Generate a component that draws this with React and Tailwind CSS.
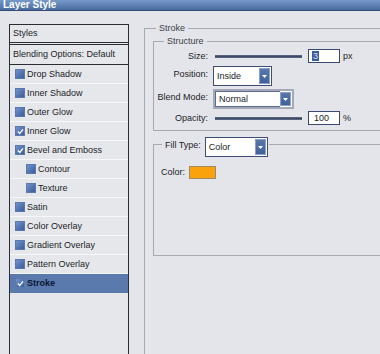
import React from "react";

const BG = "bg-[#e4e5ea]";

function Check({ checked }) {
  return (
    <div className="w-[10px] h-[10px] shrink-0 border border-[#5a79b0] bg-gradient-to-br from-[#7393c8] to-[#3a5c9b] flex items-center justify-center">
      {checked && (
        <svg width="7" height="7" viewBox="0 0 7 7">
          <path d="M1 3.6 L2.8 5.4 L6 1.4" stroke="#fff" strokeWidth="1.4" fill="none" />
        </svg>
      )}
    </div>
  );
}

function Row({ label, checked, sub, selected }) {
  return (
    <div
      className={
        "h-[19px] border-b flex items-center gap-[2px] " +
        (sub ? "pl-[16px] " : "pl-[5px] ") +
        (selected
          ? "bg-[#5a79ad] border-[#5a79ad] font-bold text-[#0b1431]"
          : "border-[#f6f7f9]")
      }
    >
      <Check checked={checked} />
      <span className="leading-[11px]">{label}</span>
    </div>
  );
}

function Arrow() {
  return (
    <svg width="5" height="3" viewBox="0 0 5 3">
      <path d="M0 0 H5 L2.5 3 Z" fill="#fff" />
    </svg>
  );
}

function Select({ value, width, framed }) {
  return (
    <div
      className={
        "h-[20px] flex items-stretch bg-white " +
        (framed ? "border-2 border-[#a3a9b9] " : "border border-[#3e4e73] ")
      }
      style={{ width }}
    >
      <div className={"flex-1 flex items-center pl-[3px] leading-[11px] " + (framed ? "border border-[#5e6d8d] border-r-0" : "")}>
        {value}
      </div>
      <div className={"w-[11px] my-[1px] mr-[1px] bg-gradient-to-b from-[#5877ad] to-[#41619a] border border-[#8aa0c8] flex items-center justify-center " + (framed ? "my-0 mr-0" : "")}>
        <Arrow />
      </div>
    </div>
  );
}

function SliderRow({ label, value, unit, selected }) {
  return (
    <div className="flex items-center h-[14px]">
      <div className="w-[54px] text-right leading-[11px]">{label}</div>
      <div className="ml-[7px] w-[87px] h-[3px] bg-[#3c4867] border-y border-[#56627e]" />
      <div className="ml-[6px] w-[32px] h-[14px] bg-white border border-[#3a4a6d] flex items-center pl-[2px]">
        {selected ? (
          <span className="bg-[#3a5d9c] text-[#d6e0f2] px-[1px] leading-[10px] ml-[1px]">{value}</span>
        ) : (
          <span className="leading-[10px] pl-[3px]">{value}</span>
        )}
      </div>
      <span className="ml-[3px] leading-[11px]">{unit}</span>
    </div>
  );
}

function SelectRow({ label, value, width, framed }) {
  return (
    <div className="flex items-center h-[20px]">
      <div className="w-[54px] text-right leading-[11px] -mt-[3px]">{label}</div>
      <div className="ml-[5px]">
        <Select value={value} width={width} framed={framed} />
      </div>
    </div>
  );
}

export default function App() {
  return (
    <div
      className={"w-[380px] h-[354px] overflow-hidden text-[9px] text-[#1b1d27] " + BG}
      style={{ fontFamily: "'Liberation Sans', Arial, sans-serif" }}
    >
      <div className="h-[11px] bg-gradient-to-b from-[#7799ca] to-[#4a6b9f] border-b border-[#2f4a78] pl-[3px] text-white font-bold text-[10px] leading-[10px]">
        Layer Style
      </div>
      <div className="flex">
        {/* Left list */}
        <div className="ml-[9px] mt-[13px] w-[120px] h-[340px] border border-[#2b2d35] bg-[#e6e7eb] shrink-0">
          <div className="h-[20px] border-b-[3px] border-double border-[#2b2d35] flex items-center pl-[3px] leading-[11px]">
            Styles
          </div>
          <div className="h-[20px] border-b border-[#2b2d35] flex items-center pl-[3px] leading-[11px]">
            Blending Options: Default
          </div>
          <Row label="Drop Shadow" />
          <Row label="Inner Shadow" />
          <Row label="Outer Glow" />
          <Row label="Inner Glow" checked />
          <Row label="Bevel and Emboss" checked />
          <Row label="Contour" sub />
          <Row label="Texture" sub />
          <Row label="Satin" />
          <Row label="Color Overlay" />
          <Row label="Gradient Overlay" />
          <Row label="Pattern Overlay" />
          <Row label="Stroke" checked selected />
        </div>

        {/* Right area */}
        <div className="ml-[15px] mt-[17px] flex-1 min-w-0">
          <div className="h-[340px] border-l border-t border-[#a6a9b2] pl-[8px]">
            <div className={"-mt-[6px] ml-[3px] w-fit px-[3px] leading-[11px] text-[#3b3d47] " + BG}>
              Stroke
            </div>
            <div className="mt-[7px] border-l border-t border-b border-[#a6a9b2] pb-[5px]">
              <div className={"-mt-[6px] ml-[10px] w-fit px-[3px] leading-[11px] text-[#3b3d47] " + BG}>
                Structure
              </div>
              <div className="mt-[2px]">
                <SliderRow label="Size:" value="3" unit="px" selected />
              </div>
              <div className="mt-[3px]">
                <SelectRow label="Position:" value="Inside" width={59} />
              </div>
              <div className="mt-[3px]">
                <SelectRow label="Blend Mode:" value="Normal" width={81} framed />
              </div>
              <div className="mt-[2px]">
                <SliderRow label="Opacity:" value="100" unit="%" />
              </div>
            </div>
            <div className="mt-[13px] h-[112px] border-l border-t border-b border-[#a6a9b2]">
              <div className={"-mt-[8px] ml-[8px] w-fit pl-[3px] pr-[1px] flex items-center " + BG}>
                <span className="leading-[11px] -mt-[3px]">Fill Type:</span>
                <div className="ml-[4px]">
                  <Select value="Color" width={63} />
                </div>
              </div>
              <div className="mt-[9px] pl-[7px] flex items-center">
                <span className="leading-[11px]">Color:</span>
                <div className="ml-[4px] w-[27px] h-[13px] bg-[#f9a30c] border border-[#a08a66]" />
              </div>
            </div>
          </div>
        </div>
      </div>
    </div>
  );
}
